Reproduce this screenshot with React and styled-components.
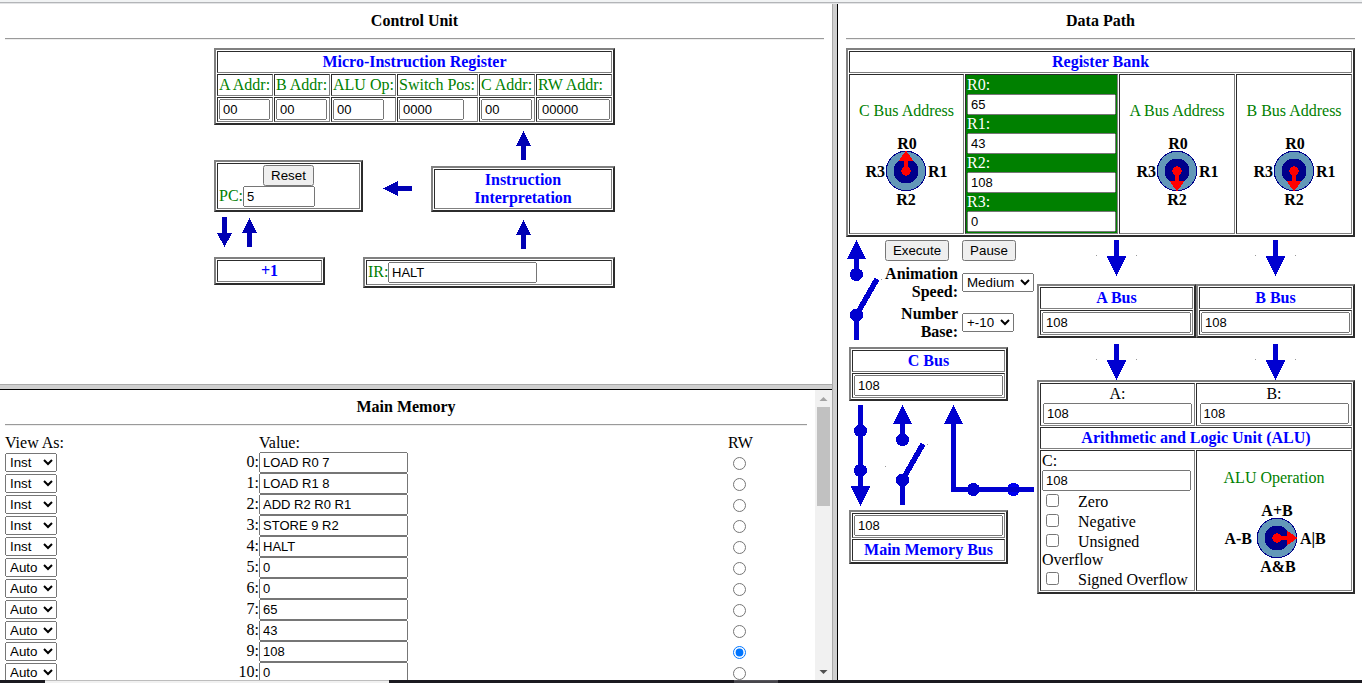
import React from "react";
import styled, { createGlobalStyle } from "styled-components";

const GlobalStyle = createGlobalStyle`
  html, body { margin: 0; padding: 0; background: #fff; overflow: hidden; }
  * { box-sizing: border-box; }
  body { font: 16px/18px "Liberation Serif", "Times New Roman", serif; color: #000; }
  input, select, button { font: 13.333px "Liberation Sans", Arial, sans-serif; margin: 0; }
  svg { display: block; flex: none; }
`;

/* ---------- frames ---------- */
const Page = styled.div`
  width: 1362px;
  height: 683px;
  display: flex;
  flex-direction: column;
`;
const TopStrip = styled.div`
  height: 4px;
  background: #f1f3f4;
  border-bottom: 1px solid #e3e4e6;
  box-shadow: inset 0 -1px 0 #b3b5b8;
`;
const FrameSet = styled.div`
  height: 676px;
  display: grid;
  grid-template-columns: 832px 6px 524px;
`;
const LeftFrames = styled.div`
  display: grid;
  grid-template-rows: 380px 6px 290px;
  min-height: 0;
`;
const ColumnSplitter = styled.div`
  background: #cfcfcf;
  border-left: 1px solid #a9a9a9;
  border-right: 1px solid #000;
`;
const RowSplitter = styled.div`
  background: #cfcfcf;
  border-top: 1px solid #a9a9a9;
  border-bottom: 1px solid #000;
`;
const ControlFrame = styled.section`
  padding: 8px 8px 0 5px;
  overflow: hidden;
`;
const DataFrame = styled.section`
  padding: 8px 7px 0 8px;
  overflow: hidden;
`;
const MemoryFrame = styled.section`
  display: flex;
  overflow: hidden;
`;
const MemoryBody = styled.div`
  width: 815px;
  padding: 8px 8px 0 5px;
`;
const Title = styled.h1`
  margin: 0;
  font-size: 16px;
  line-height: 18px;
  text-align: center;
`;
const Rule = styled.hr`
  margin: 8px 0;
  height: 2px;
  border: 0;
  border-top: 1px solid #9a9a9a;
  border-bottom: 1px solid #eee;
`;
const BottomStrip = styled.div`
  height: 3px;
  display: flex;
  background: #1b1a20;
`;
const StripSegment = styled.div`
  margin-left: ${(p) => p.$gap}px;
  width: ${(p) => p.$width}px;
  background: ${(p) => p.$color};
  border-top: 1px solid ${(p) => p.$edge};
`;

/* ---------- tables and controls ---------- */
const Box = styled.table`
  flex: none;
  table-layout: fixed;
  width: ${(p) => p.$width}px;
  margin: ${(p) => p.$margin || "0"};
  border: 2px outset gray;
  border-collapse: separate;
  border-spacing: 1px;
`;
const Cell = styled.td`
  border: 1px inset gray;
  padding: 1px;
  white-space: ${(p) => (p.$wrap ? "normal" : "nowrap")};
  vertical-align: ${(p) => (p.$top ? "top" : "middle")};
  text-align: ${(p) => p.$align || "left"};
  color: ${(p) => p.$color || "#000"};
  background: ${(p) => p.$fill || "transparent"};
`;
const Heading = styled.th`
  border: 1px inset gray;
  padding: 1px;
  color: #00f;
  font-weight: bold;
  text-align: center;
`;
const Line = styled.div`
  height: 18px;
`;
const Field = styled.input`
  display: block;
  flex: none;
  width: ${(p) => p.$width || 149}px;
  height: 21px;
  && {
    font-size: 13px;
    margin: ${(p) => (p.$centered ? "0 auto" : "0")};
  }
`;
const PushButton = styled.button`
  display: block;
  width: ${(p) => p.$width}px;
  height: 21px;
  padding: 0;
  && { margin: ${(p) => (p.$centered ? "0 auto" : "0")}; }
`;
const Choice = styled.select`
  display: block;
  width: ${(p) => p.$width}px;
  height: 19px;
  && { margin-top: ${(p) => p.$drop || 0}px; }
`;
const LabeledField = styled.div`
  display: flex;
  align-items: flex-start;
  color: green;
`;
const FieldLabel = styled.span`
  width: ${(p) => p.$width}px;
  padding-top: 1px;
  white-space: nowrap;
`;

/* ---------- control unit ---------- */
const ControlDiagram = styled.div`
  width: 401px;
  margin-left: 209px;
`;
const DiagramRow = styled.div`
  display: flex;
  align-items: flex-start;
  height: ${(p) => p.$height}px;
`;
const ArrowSlot = styled.div`
  flex: none;
  margin-left: ${(p) => p.$left}px;
  margin-top: ${(p) => p.$top}px;
`;

/* ---------- main memory ---------- */
const MemoryRow = styled.div`
  display: grid;
  grid-template-columns: 52px 202px 149px 319px 19px;
  height: ${(p) => p.$height}px;
`;
const ColumnName = styled.span`
  padding-left: ${(p) => p.$indent || 0}px;
  white-space: nowrap;
`;
const Address = styled.span`
  padding-top: 1px;
  text-align: right;
`;
const Radio = styled.input`
  width: 13px;
  height: 13px;
  && { margin: 5px 0 0 6px; }
`;
const ScrollBar = styled.div`
  width: 17px;
  display: flex;
  flex-direction: column;
  align-items: center;
  background: #f1f1f1;
`;
const ScrollThumb = styled.div`
  width: 13px;
  height: 99px;
  background: #c1c1c1;
`;
const ScrollGap = styled.div`
  flex: 1;
`;

/* ---------- data path ---------- */
const Columns = styled.div`
  display: grid;
  grid-template-columns: 191px 318px;
  align-items: start;
`;
const SwitchRow = styled.div`
  display: flex;
  height: 110px;
`;
const Controls = styled.div`
  padding-top: 3px;
  display: grid;
  grid-template-columns: 73px 75px;
  grid-template-rows: 21px 36px 36px;
  gap: 4px;
`;
const ControlLabel = styled.label`
  text-align: right;
  font-weight: bold;
  white-space: nowrap;
`;
const BusPair = styled.div`
  display: flex;
`;
const DialTitle = styled.div`
  padding: ${(p) => p.$drop}px 0 1px;
  text-align: center;
  color: green;
`;
const DialSlot = styled.div`
  display: flex;
  justify-content: center;
  padding-left: ${(p) => p.$before || 0}px;
  padding-right: ${(p) => p.$after || 0}px;
`;
const Flag = styled.div`
  white-space: normal;
`;
const FlagBox = styled.input`
  width: 13px;
  height: 13px;
  && { margin: 3px 3px 3px 4px; }
`;

const noop = () => {};

const SmallArrow = ({ dir }) => {
  const across = dir === "left";
  const points = {
    up: "7.5,0 15,14.5 10,14.5 10,29 5,29 5,14.5 0,14.5",
    down: "7.5,30 15,16 10,16 10,0 5,0 5,16 0,16",
    left: "0,7.5 15,0 15,5 29,5 29,10 15,10 15,15",
  }[dir];
  return (
    <svg width={across ? 29 : 15} height={across ? 15 : 30} shapeRendering="crispEdges">
      <polygon points={points} fill="#0000b4" />
    </svg>
  );
};

const Dial = ({ labels, angle, wide }) => {
  const side = wide ? 25 : 21;
  return (
    <svg width="112" height="88" viewBox="-56 -50 112 88">
      <g shapeRendering="crispEdges">
        <circle r="19.8" fill="#6398b8" stroke="#00008b" strokeWidth="1" />
        <circle r="12.5" fill="#00008b" />
        <g fill="#f00" transform={`rotate(${angle})`}>
          <circle r="4.7" />
          <rect x="-2" y="-12" width="4" height="12" />
          <polygon points="0,-20.5 7.5,-10 -7.5,-10" />
        </g>
      </g>
      <g fontFamily="Liberation Serif, Times New Roman, serif" fontSize="16" fontWeight="bold">
        <text x={wide ? 0 : 1} y="-22" textAnchor="middle">{labels[0]}</text>
        <text x={wide ? 23 : 22} y="6">{labels[1]}</text>
        <text x={wide ? 1 : 0} y="34" textAnchor="middle">{labels[2]}</text>
        <text x={-side} y="6" textAnchor="end">{labels[3]}</text>
      </g>
    </svg>
  );
};

const REGISTERS = ["R0", "R1", "R2", "R3"];
const BLUE = "#0000d0";

/* x offsets of the A and B bus centre lines inside the right column */
const BusArrows = ({ height, top }) => (
  <svg width="318" height={height} shapeRendering="crispEdges">
    {[79.5, 238.5].map((x) => (
      <g key={x} transform={`translate(${x} ${top})`}>
        <polygon points="-2.5,0 2.5,0 2.5,16 10,16 0,36 -10,16 -2.5,16" fill={BLUE} />
        <rect x="-20.5" y="15" width="1" height="1" fill="#999" />
        <rect x="19.5" y="15" width="1" height="1" fill="#999" />
      </g>
    ))}
  </svg>
);

const CBusSwitch = () => (
  <svg width="39" height="110" shapeRendering="crispEdges">
    <g fill={BLUE}>
      <polygon points="10.5,3 20,22 13,22 13,38 8,38 8,22 1,22" />
      <circle cx="10.5" cy="37.5" r="6.5" />
      <circle cx="10.5" cy="78" r="6.5" />
      <rect x="8" y="78" width="5" height="25" />
    </g>
    <line x1="10.5" y1="78" x2="31" y2="42" stroke={BLUE} strokeWidth="5.5" />
    <rect x="35" y="42" width="1" height="1" fill="#999" />
  </svg>
);

const MemoryWiring = () => (
  <svg width="191" height="109" shapeRendering="crispEdges">
    <g fill={BLUE}>
      <polygon points="12,4 17,4 17,85 24.5,85 14.5,105 4.5,85 12,85" />
      <circle cx="14.5" cy="29.8" r="6.5" />
      <circle cx="14.5" cy="69.5" r="6.5" />
      <polygon points="56.5,4 66,23 59,23 59,38 54,38 54,23 47,23" />
      <circle cx="56.5" cy="38.7" r="6.5" />
      <circle cx="56.5" cy="79" r="6.5" />
      <rect x="54" y="79" width="5" height="25" />
      <polygon points="107.5,4 117,23 110,23 110,86 188,86 188,91 105,91 105,23 98,23" />
      <circle cx="127.5" cy="88.5" r="6.5" />
      <circle cx="167.5" cy="88.5" r="6.5" fill="#0000f0" />
      <rect x="161" y="86" width="13" height="5" />
    </g>
    <line x1="56.5" y1="79" x2="77" y2="43" stroke={BLUE} strokeWidth="5.5" />
    <rect x="39" y="65" width="1" height="1" fill="#999" />
    <rect x="81" y="43" width="1" height="1" fill="#999" />
  </svg>
);

const BusBox = ({ name, value, margin, valueFirst }) => {
  const head = <tr><Heading>{name}</Heading></tr>;
  const body = <tr><Cell><Field defaultValue={value} /></Cell></tr>;
  return (
    <Box $width={159} $margin={margin}>
      <tbody>
        {valueFirst ? body : head}
        {valueFirst ? head : body}
      </tbody>
    </Box>
  );
};

const MICRO = [
  { label: "A Addr:", value: "00", col: 56, field: 51 },
  { label: "B Addr:", value: "00", col: 56, field: 51 },
  { label: "ALU Op:", value: "00", col: 65, field: 51 },
  { label: "Switch Pos:", value: "0000", col: 81, field: 65 },
  { label: "C Addr:", value: "00", col: 56, field: 51 },
  { label: "RW Addr:", value: "00000", col: 76, field: 72 },
];

const ControlUnit = () => (
  <ControlFrame>
    <Title>Control Unit</Title>
    <Rule />
    <ControlDiagram>
      <Box $width={401}>
        <colgroup>{MICRO.map((m) => <col key={m.label} width={m.col} />)}</colgroup>
        <tbody>
          <tr><Heading colSpan={6}>Micro-Instruction Register</Heading></tr>
          <tr>{MICRO.map((m) => <Cell key={m.label} $color="green"><Line>{m.label}</Line></Cell>)}</tr>
          <tr>{MICRO.map((m) => <Cell key={m.label}><Field $width={m.field} defaultValue={m.value} /></Cell>)}</tr>
        </tbody>
      </Box>
      <DiagramRow $height={35}>
        <ArrowSlot $left={302} $top={6}><SmallArrow dir="up" /></ArrowSlot>
      </DiagramRow>
      <DiagramRow $height={52}>
        <Box $width={149}>
          <tbody><tr><Cell>
            <PushButton $width={51} $centered>Reset</PushButton>
            <LabeledField><FieldLabel $width={24}>PC:</FieldLabel><Field $width={72} defaultValue="5" /></LabeledField>
          </Cell></tr></tbody>
        </Box>
        <ArrowSlot $left={20} $top={21}><SmallArrow dir="left" /></ArrowSlot>
        <Box $width={184} $margin="6px 0 0 19px">
          <tbody><tr><Heading>Instruction<br />Interpretation</Heading></tr></tbody>
        </Box>
      </DiagramRow>
      <DiagramRow $height={45}>
        <ArrowSlot $left={3} $top={5}><SmallArrow dir="down" /></ArrowSlot>
        <ArrowSlot $left={10} $top={6}><SmallArrow dir="up" /></ArrowSlot>
        <ArrowSlot $left={259} $top={8}><SmallArrow dir="up" /></ArrowSlot>
      </DiagramRow>
      <DiagramRow $height={31}>
        <Box $width={111}><tbody><tr><Heading>+1</Heading></tr></tbody></Box>
        <Box $width={252} $margin="0 0 0 38px">
          <tbody><tr><Cell>
            <LabeledField><FieldLabel $width={20}>IR:</FieldLabel><Field defaultValue="HALT" /></LabeledField>
          </Cell></tr></tbody>
        </Box>
      </DiagramRow>
    </ControlDiagram>
  </ControlFrame>
);

const MEMORY = [
  ["Inst", "LOAD R0 7"], ["Inst", "LOAD R1 8"], ["Inst", "ADD R2 R0 R1"],
  ["Inst", "STORE 9 R2"], ["Inst", "HALT"], ["Auto", "0"], ["Auto", "0"],
  ["Auto", "65"], ["Auto", "43"], ["Auto", "108"], ["Auto", "0"],
];

const MainMemory = () => (
  <MemoryFrame>
    <MemoryBody>
      <Title>Main Memory</Title>
      <Rule />
      <MemoryRow $height={18}>
        <ColumnName>View As:</ColumnName>
        <span />
        <ColumnName>Value:</ColumnName>
        <span />
        <ColumnName $indent={1}>RW</ColumnName>
      </MemoryRow>
      {MEMORY.map(([view, value], i) => (
        <MemoryRow key={i} $height={21}>
          <Choice $width={52} $drop={1} defaultValue={view}>
            <option>Auto</option><option>Inst</option>
          </Choice>
          <Address>{i}:</Address>
          <Field defaultValue={value} />
          <span />
          <Radio type="radio" name="rw" checked={i === 9} onChange={noop} />
        </MemoryRow>
      ))}
    </MemoryBody>
    <ScrollBar>
      <svg width="17" height="17"><polygon points="8.5,7 12.5,11 4.5,11" fill="#a3a3a3" /></svg>
      <ScrollThumb />
      <ScrollGap />
      <svg width="17" height="17"><polygon points="8.5,11 12.5,7 4.5,7" fill="#505050" /></svg>
    </ScrollBar>
  </MemoryFrame>
);

const AddressCell = ({ bus, angle, after }) => (
  <Cell $top>
    <DialTitle $drop={26}>{bus} Bus Address</DialTitle>
    <DialSlot $after={after}><Dial labels={REGISTERS} angle={angle} /></DialSlot>
  </Cell>
);

const DataPath = () => (
  <DataFrame>
    <Title>Data Path</Title>
    <Rule />
    <Box $width={509}>
      <colgroup><col width="115" /><col width="153" /><col width="116" /><col width="116" /></colgroup>
      <tbody>
        <tr><Heading colSpan={4}>Register Bank</Heading></tr>
        <tr>
          <AddressCell bus="C" angle={0} after={1} />
          <Cell $fill="green" $color="#fff">
            {["65", "43", "108", "0"].map((v, i) => (
              <React.Fragment key={i}>
                <Line>{REGISTERS[i]}:</Line>
                <Field defaultValue={v} />
              </React.Fragment>
            ))}
          </Cell>
          <AddressCell bus="A" angle={180} />
          <AddressCell bus="B" angle={180} />
        </tr>
      </tbody>
    </Box>
    <Columns>
      <div>
        <SwitchRow>
          <CBusSwitch />
          <Controls>
            <PushButton $width={64}>Execute</PushButton>
            <PushButton $width={54}>Pause</PushButton>
            <ControlLabel>Animation<br />Speed:</ControlLabel>
            <Choice $width={72} $drop={8}><option>Medium</option></Choice>
            <ControlLabel>Number<br />Base:</ControlLabel>
            <Choice $width={52} $drop={8}><option>+-10</option></Choice>
          </Controls>
        </SwitchRow>
        <BusBox name="C Bus" value="108" margin="0 0 0 3px" />
        <MemoryWiring />
        <BusBox name="Main Memory Bus" value="108" margin="0 0 0 3px" valueFirst />
      </div>
      <div>
        <BusArrows height={47} top={3} />
        <BusPair>
          <BusBox name="A Bus" value="108" />
          <BusBox name="B Bus" value="108" />
        </BusPair>
        <BusArrows height={42} top={6} />
        <Box $width={318}>
          <colgroup><col width="155" /><col width="156" /></colgroup>
          <tbody>
            <tr>
              <Cell $align="center"><Line>A:</Line><Field $centered defaultValue="108" /></Cell>
              <Cell $align="center"><Line>B:</Line><Field $centered defaultValue="108" /></Cell>
            </tr>
            <tr><Heading colSpan={2}>Arithmetic and Logic Unit (ALU)</Heading></tr>
            <tr>
              <Cell $top $wrap>
                <Line>C:</Line>
                <Field defaultValue="108" />
                {["Zero", "Negative", "Unsigned Overflow", "Signed Overflow"].map((f) => (
                  <Flag key={f}>
                    <FlagBox type="checkbox" />
                    {"\u00a0\u00a0\u00a0\u00a0"}{f}
                  </Flag>
                ))}
              </Cell>
              <Cell $top>
                <DialTitle $drop={17}>ALU Operation</DialTitle>
                <DialSlot $before={6}>
                  <Dial labels={["A+B", "A|B", "A&B", "A-B"]} angle={90} wide />
                </DialSlot>
              </Cell>
            </tr>
          </tbody>
        </Box>
      </div>
    </Columns>
  </DataFrame>
);

export default function App() {
  return (
    <Page>
      <GlobalStyle />
      <TopStrip />
      <FrameSet>
        <LeftFrames>
          <ControlUnit />
          <RowSplitter />
          <MainMemory />
        </LeftFrames>
        <ColumnSplitter />
        <DataPath />
      </FrameSet>
      <BottomStrip>
        <StripSegment $gap={45} $width={344} $color="#f1f1f1" $edge="#bdbdbd" />
        <StripSegment $gap={345} $width={44} $color="#47464c" $edge="#55545a" />
      </BottomStrip>
    </Page>
  );
}
